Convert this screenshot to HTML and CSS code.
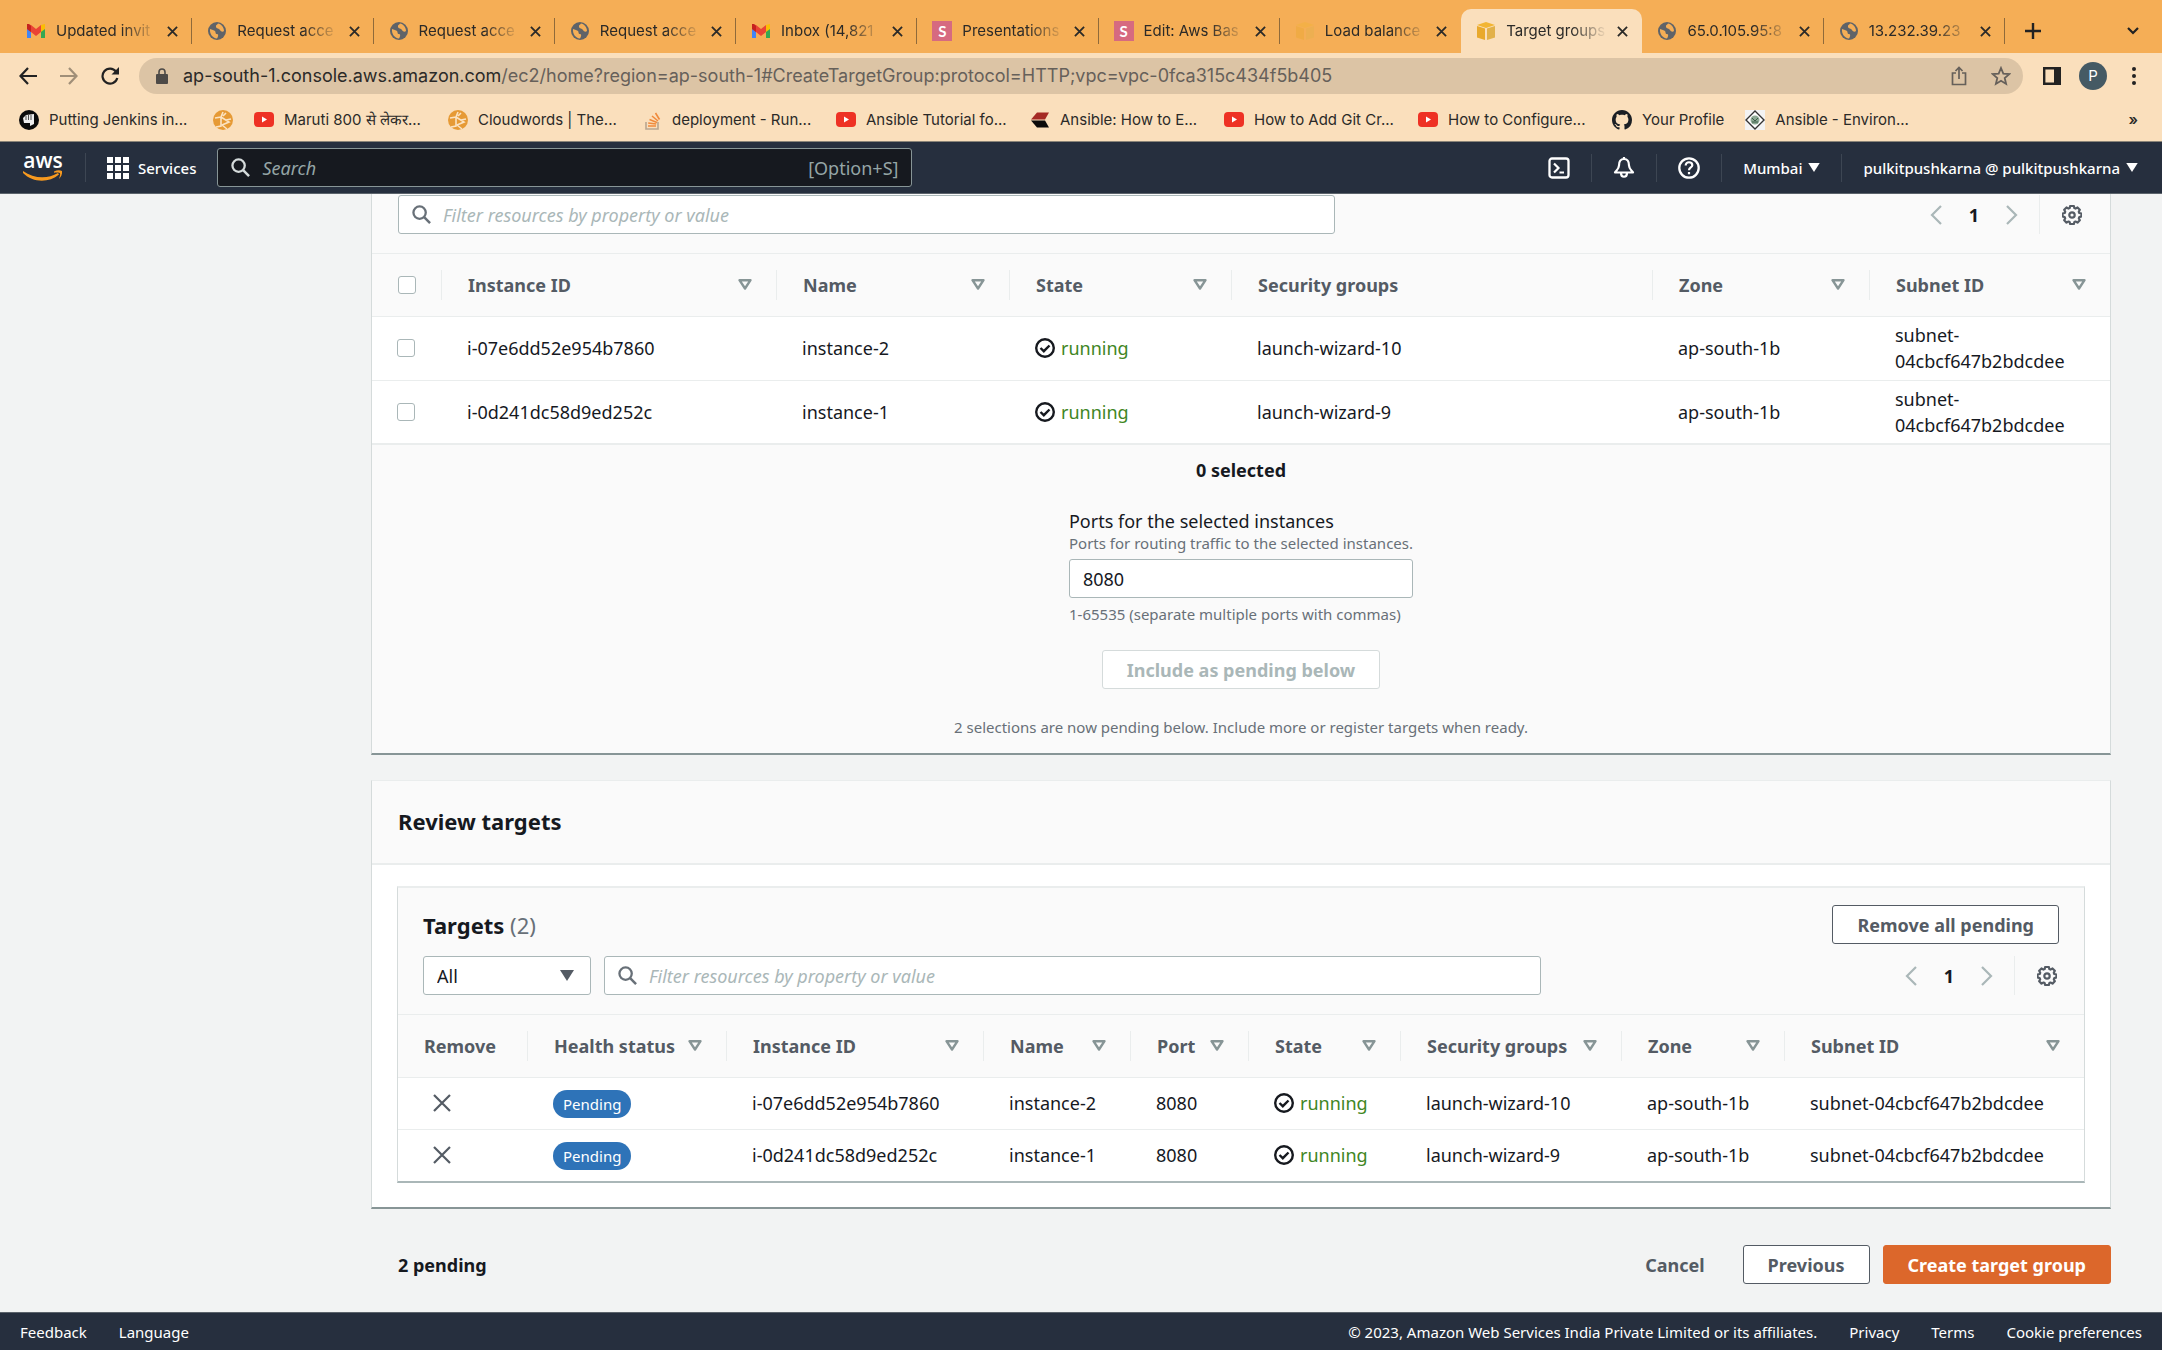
FILE: index.html
```html
<!DOCTYPE html>
<html lang="en">

<head>
    <meta charset="UTF-8">
    <meta name="viewport" content="width=device-width, initial-scale=1.0">
    <title>Target groups</title>
    <link rel="stylesheet" href="styles.css">
</head>

<body>

    <!-- shared icons -->
    <svg class="sprite" aria-hidden="true">
        <symbol id="gmail" viewBox="0 0 20 20">
            <path d="M1 4v13h4V8z" fill="#4285f4" />
            <path d="M19 4v13h-4V8z" fill="#34a853" />
            <path d="M15 4l4-1v5l-4 3z" fill="#fbbc04" />
            <path d="M1 3l4 1 5 4 5-4v7l-5 4-5-4-4-3z" fill="#ea4335" />
            <path d="M1 3v5l4 3V5L3 3z" fill="#c5221f" />
        </symbol>
        <symbol id="globe" viewBox="0 0 20 20">
            <circle cx="10" cy="10" r="9" fill="#5f6368" />
            <path d="M3 8c2 1 4 1 5 2s0 3 2 3 1 3 0 4.500C5.500 17 2.500 13 3 8zM11 2.500C10 4 8.500 4 9 6s3 1 4 3 3 2 4 1c0-4-3-7-6-7.500z" fill="#f5ae56" />
        </symbol>
        <symbol id="cube" viewBox="0 0 20 20">
            <path d="M1 4l9-3 9 3-9 3z" fill="#f2b533" />
            <path d="M1 5l8 2.500V19l-8-2.500z" fill="#e9a92c" />
            <path d="M19 5l-8 2.500V19l8-2.500z" fill="#e2b14a" />
        </symbol>
        <symbol id="close" viewBox="0 0 12 12">
            <path d="M1 1l10 10M11 1L1 11" stroke="currentColor" stroke-width="2" fill="none" />
        </symbol>
        <symbol id="youtube" viewBox="0 0 20 20">
            <rect y="2" width="20" height="15" rx="4" fill="#ee3124" />
            <path d="M8 6.500v6l5-3z" fill="#fff" />
        </symbol>
        <symbol id="cloudwords" viewBox="0 0 20 20">
            <circle cx="10" cy="10" r="10" fill="#e69a35" />
            <path d="M2 8l6-1 2-5M8 7l8 5-7 3M13 3l-3 3M18 9l-5 1M9 15l5 4M8 7v9l-5 1" stroke="#fbe3c2" stroke-width="1.600" fill="none" />
        </symbol>
        <symbol id="search" viewBox="0 0 20 20">
            <circle cx="8" cy="8" r="6.500" stroke="currentColor" stroke-width="2.400" fill="none" />
            <path d="M12.500 12.500L19 19" stroke="currentColor" stroke-width="2.600" />
        </symbol>
        <symbol id="sort" viewBox="0 0 14 11">
            <path d="M1.500 1.200h11L7 9.500z" stroke="currentColor" stroke-width="2.400" stroke-linejoin="round" fill="none" />
        </symbol>
        <symbol id="caret" viewBox="0 0 14 11">
            <path d="M0 0h14L7 11z" fill="currentColor" />
        </symbol>
        <symbol id="check" viewBox="0 0 20 20">
            <circle cx="10" cy="10" r="8.800" stroke="currentColor" stroke-width="2.400" fill="none" />
            <path d="M5.500 10l3.300 3.200 5.700-5.700" stroke="currentColor" stroke-width="2.400" fill="none" />
        </symbol>
        <symbol id="prev" viewBox="0 0 12 20">
            <path d="M11 1L2 10l9 9" stroke="currentColor" stroke-width="2.200" fill="none" />
        </symbol>
        <symbol id="next" viewBox="0 0 12 20">
            <path d="M1 1l9 9-9 9" stroke="currentColor" stroke-width="2.200" fill="none" />
        </symbol>
        <symbol id="gear" viewBox="0 0 20 20">
            <path d="M8.200 1h3.600l.6 2.100 1.100.5 2-1.100 2.300 2.300-1 2 .5 1.200 2.100.5v3l-2.100.6-.5 1.200 1 2-2.300 2.300-2-1.100-1.100.5-.6 2.100H8.200l-.6-2.100-1.100-.5-2 1.100-2.300-2.300 1-2-.5-1.200L.6 11.500v-3L2.700 8l.5-1.200-1-2 2.300-2.300 2 1.100 1.100-.5z" stroke="currentColor" stroke-width="2.200" stroke-linejoin="round" fill="none" />
            <circle cx="10" cy="10" r="2.700" stroke="currentColor" stroke-width="2.200" fill="none" />
        </symbol>
    </svg>

    <div class="browser">
        <div class="tabstrip">
            <div class="tabs">
                <div class="tab"><svg class="icon"><use href="#gmail" /></svg><span class="tab-title">Updated invit</span><button class="tab-close" aria-label="Close tab"><svg><use href="#close" /></svg></button></div>
                <div class="tab"><svg class="icon"><use href="#globe" /></svg><span class="tab-title">Request acce</span><button class="tab-close" aria-label="Close tab"><svg><use href="#close" /></svg></button></div>
                <div class="tab"><svg class="icon"><use href="#globe" /></svg><span class="tab-title">Request acce</span><button class="tab-close" aria-label="Close tab"><svg><use href="#close" /></svg></button></div>
                <div class="tab"><svg class="icon"><use href="#globe" /></svg><span class="tab-title">Request acce</span><button class="tab-close" aria-label="Close tab"><svg><use href="#close" /></svg></button></div>
                <div class="tab"><svg class="icon"><use href="#gmail" /></svg><span class="tab-title">Inbox (14,821</span><button class="tab-close" aria-label="Close tab"><svg><use href="#close" /></svg></button></div>
                <div class="tab"><span class="icon letter">S</span><span class="tab-title">Presentations</span><button class="tab-close" aria-label="Close tab"><svg><use href="#close" /></svg></button></div>
                <div class="tab"><span class="icon letter">S</span><span class="tab-title">Edit: Aws Bas</span><button class="tab-close" aria-label="Close tab"><svg><use href="#close" /></svg></button></div>
                <div class="tab no-line"><svg class="icon faded"><use href="#cube" /></svg><span class="tab-title">Load balance</span><button class="tab-close" aria-label="Close tab"><svg><use href="#close" /></svg></button></div>
                <div class="tab active"><svg class="icon"><use href="#cube" /></svg><span class="tab-title">Target groups</span><button class="tab-close" aria-label="Close tab"><svg><use href="#close" /></svg></button></div>
                <div class="tab"><svg class="icon"><use href="#globe" /></svg><span class="tab-title">65.0.105.95:8</span><button class="tab-close" aria-label="Close tab"><svg><use href="#close" /></svg></button></div>
                <div class="tab"><svg class="icon"><use href="#globe" /></svg><span class="tab-title">13.232.39.23</span><button class="tab-close" aria-label="Close tab"><svg><use href="#close" /></svg></button></div>
            </div>
            <div class="tab-tools">
                <button aria-label="New tab"><svg width="16" height="16" viewBox="0 0 16 16"><path d="M8 0v16M0 8h16" stroke="#222" stroke-width="2.400" /></svg></button>
                <button aria-label="Search tabs"><svg width="12" height="8" viewBox="0 0 12 8"><path d="M1 1l5 5 5-5" stroke="#222" stroke-width="2.200" fill="none" /></svg></button>
            </div>
        </div>

        <div class="toolbar">
            <div class="nav-buttons">
                <button aria-label="Back"><svg width="18" height="18" viewBox="0 0 18 18"><path d="M18 9H2M9 1L1.500 9 9 17" stroke="#222" stroke-width="2.200" fill="none" /></svg></button>
                <button aria-label="Forward"><svg width="18" height="18" viewBox="0 0 18 18"><path d="M0 9h16M9 1l7.500 8L9 17" stroke="#a08f78" stroke-width="2.200" fill="none" /></svg></button>
                <button aria-label="Reload"><svg width="18" height="18" viewBox="0 0 18 18"><path d="M15 4.500A7.500 7.500 0 1 0 16.300 11" stroke="#222" stroke-width="2.200" fill="none" /><path d="M18 0v7.500h-7.500z" fill="#222" /></svg></button>
            </div>
            <div class="omnibox">
                <svg width="12" height="16" viewBox="0 0 12 16"><rect y="6" width="12" height="10" rx="1" fill="#4d4a47" /><path d="M3 7V4a3 3 0 0 1 6 0v3" stroke="#4d4a47" stroke-width="1.600" fill="none" /></svg>
                <span class="url">ap-south-1.console.aws.amazon.com<span>/ec2/home?region=ap-south-1#CreateTargetGroup:protocol=HTTP;vpc=vpc-0fca315c434f5b405</span></span>
                <svg width="16" height="20" viewBox="0 0 16 20"><path d="M5 7H1.500v11.500h13V7H11M8 13V2M4.500 5L8 1.500 11.500 5" stroke="#66605a" stroke-width="1.700" fill="none" /></svg>
                <svg width="20" height="20" viewBox="0 0 20 20"><path d="M10 2l2.300 5.600 6 .5-4.600 3.900 1.400 5.900L10 14.700l-5.100 3.200L6.300 12 1.700 8.100l6-.5z" stroke="#66605a" stroke-width="1.800" fill="none" /></svg>
            </div>
            <div class="tool-buttons">
                <button aria-label="Side panel"><svg width="18" height="18" viewBox="0 0 18 18"><path d="M1.200 1.200h15.600v15.600H1.200z" stroke="#222" stroke-width="2.400" fill="none" /><path d="M11 0h7v18h-7z" fill="#222" /></svg></button>
                <button class="avatar">P</button>
                <button aria-label="Menu"><svg width="4" height="18" viewBox="0 0 4 18"><circle cx="2" cy="2" r="2" fill="#222" /><circle cx="2" cy="9" r="2" fill="#222" /><circle cx="2" cy="16" r="2" fill="#222" /></svg></button>
            </div>
        </div>

        <div class="bookmarks">
            <a href="#"><svg class="icon" viewBox="0 0 20 20"><circle cx="10" cy="10" r="10" fill="#0b0b0b" /><path d="M4 8l3-3 8-1v10l-4 2v-3H5z" fill="#eee" /><path d="M7 5.500V10M9.500 5v5M12 5v5" stroke="#0b0b0b" stroke-width=".7" /></svg><span class="bm">Putting Jenkins in...</span></a>
            <a href="#" aria-label="Cloudwords"><svg class="icon"><use href="#cloudwords" /></svg></a>
            <a href="#"><svg class="icon"><use href="#youtube" /></svg><span class="bm">Maruti 800 से लेकर...</span></a>
            <a href="#"><svg class="icon"><use href="#cloudwords" /></svg><span class="bm">Cloudwords | The...</span></a>
            <a href="#"><svg class="icon" viewBox="0 0 20 20"><path d="M4 12v7h12v-7" stroke="#b9a690" stroke-width="1.600" fill="none" /><path d="M6 16h8M6.200 13l8 1M7.500 9.500l7.500 3M10 6l6 5M13.500 3l4 6.500" stroke="#f08a3c" stroke-width="1.600" /></svg><span class="bm">deployment - Run...</span></a>
            <a href="#"><svg class="icon"><use href="#youtube" /></svg><span class="bm">Ansible Tutorial fo...</span></a>
            <a href="#"><svg class="icon" viewBox="0 0 20 20"><path d="M7 2.500h12l-4 7H1z" fill="#a52a24" /><path d="M1 10.500h14l4 7H7z" fill="#0b0b0b" /></svg><span class="bm">Ansible: How to E...</span></a>
            <a href="#"><svg class="icon"><use href="#youtube" /></svg><span class="bm">How to Add Git Cr...</span></a>
            <a href="#"><svg class="icon"><use href="#youtube" /></svg><span class="bm">How to Configure...</span></a>
            <a href="#"><svg class="icon" viewBox="0 0 16 16"><path fill="#1b1f24" d="M8 0C3.580 0 0 3.580 0 8c0 3.540 2.290 6.530 5.470 7.590.4.070.55-.17.55-.38 0-.19-.01-.82-.01-1.490-2.010.37-2.530-.49-2.690-.94-.09-.23-.48-.94-.82-1.130-.28-.15-.68-.52-.01-.53.63-.01 1.080.58 1.230.82.720 1.210 1.870.87 2.330.66.070-.52.28-.87.510-1.070-1.780-.2-3.640-.89-3.640-3.950 0-.87.310-1.590.82-2.150-.08-.2-.36-1.020.08-2.120 0 0 .67-.21 2.200.82.640-.18 1.320-.27 2-.27s1.360.09 2 .27c1.530-1.040 2.200-.82 2.200-.82.440 1.100.160 1.920.080 2.120.510.560.820 1.270.820 2.150 0 3.070-1.870 3.750-3.650 3.950.290.250.540.730.540 1.480 0 1.070-.010 1.930-.010 2.200 0 .210.150.460.550.380A8.010 8.010 0 0 0 16 8c0-4.420-3.580-8-8-8z" /></svg><span>Your Profile</span></a>
            <a href="#"><svg class="icon" viewBox="0 0 20 20"><rect width="20" height="20" fill="#f3f3f3" /><path d="M10 1l9 9-9 9-9-9z" stroke="#333" stroke-width="1.400" fill="#fff" /><circle cx="10" cy="10" r="4.500" fill="#8ba893" /><path d="M7 8l3 3 3-3M7 12h6" stroke="#3c5c48" fill="none" /></svg><span class="bm">Ansible - Environ...</span></a>
            <button class="more" aria-label="More bookmarks">»</button>
        </div>
    </div>

    <header class="aws-header">
        <a href="#" class="logo" aria-label="AWS home">
            <span>aws</span>
            <svg width="40" height="12" viewBox="0 0 40 12"><path d="M0 1c11 8 25 8 35 2l1 1.500C26 13 10 13 0 3z" fill="#f79a1f" /><path d="M31 1.500c3-1.500 6-1.500 8-.5.500 3-1 6-3 8 .5-2 1.500-4 1-6-2-.5-4-.5-6-.3z" fill="#f79a1f" /></svg>
        </a>
        <button class="services"><svg width="22" height="22" viewBox="0 0 22 22"><path d="M0 0h6v6H0zM8 0h6v6H8zM16 0h6v6h-6zM0 8h6v6H0zM8 8h6v6H8zM16 8h6v6h-6zM0 16h6v6H0zM8 16h6v6H8zM16 16h6v6h-6z" fill="#fff" /></svg>Services</button>
        <label class="aws-search">
            <svg width="19" height="19"><use href="#search" /></svg>
            <input type="text" placeholder="Search" aria-label="Search">
            <span>[Option+S]</span>
        </label>
        <nav class="aws-nav">
            <button aria-label="CloudShell"><svg width="22" height="22" viewBox="0 0 22 22"><rect x="1.500" y="1.500" width="19" height="19" rx="2.500" stroke="#fff" stroke-width="2.300" fill="none" /><path d="M6 6.500l4.500 4.500L6 15.500M11.500 15.500H16" stroke="#fff" stroke-width="2.200" fill="none" /></svg></button>
            <button aria-label="Notifications"><svg width="22" height="22" viewBox="0 0 22 22"><path d="M11 2c-4 0-5 3.500-5 6.500S4 13 2 15.500h18C18 13 16 11.500 16 8.500S15 2 11 2zM11 0v2M8 16c0 5 6 5 6 0" stroke="#fff" stroke-width="2.200" stroke-linejoin="round" fill="none" /></svg></button>
            <button aria-label="Help"><svg width="22" height="22" viewBox="0 0 22 22"><circle cx="11" cy="11" r="9.700" stroke="#fff" stroke-width="2.300" fill="none" /><path d="M7.700 8.500c0-4.500 6.600-4 6.600-.3 0 2.300-3.300 2.300-3.300 5M11 15v2.300" stroke="#fff" stroke-width="2.200" fill="none" /></svg></button>
            <button>Mumbai<svg width="12" height="9"><use href="#caret" /></svg></button>
            <button>pulkitpushkarna @ pulkitpushkarna<svg width="12" height="9"><use href="#caret" /></svg></button>
        </nav>
    </header>

    <main>
        <section class="panel first">
            <div class="filter-bar">
                <label class="filter">
                    <svg width="19" height="19"><use href="#search" /></svg>
                    <input type="text" placeholder="Filter resources by property or value" aria-label="Filter instances">
                </label>
                <div class="pager">
                    <button aria-label="Previous page"><svg width="12" height="20"><use href="#prev" /></svg></button>
                    <b>1</b>
                    <button aria-label="Next page"><svg width="12" height="20"><use href="#next" /></svg></button>
                    <button class="settings" aria-label="Preferences"><svg width="20" height="20"><use href="#gear" /></svg></button>
                </div>
            </div>

            <table class="instances">
                <colgroup>
                    <col class="w-check">
                    <col class="w-id">
                    <col class="w-name">
                    <col class="w-state">
                    <col>
                    <col class="w-zone">
                    <col class="w-subnet">
                </colgroup>
                <thead>
                    <tr>
                        <th><div><input type="checkbox" aria-label="Select all"></div></th>
                        <th><div>Instance ID<svg><use href="#sort" /></svg></div></th>
                        <th><div>Name<svg><use href="#sort" /></svg></div></th>
                        <th><div>State<svg><use href="#sort" /></svg></div></th>
                        <th><div>Security groups</div></th>
                        <th><div>Zone<svg><use href="#sort" /></svg></div></th>
                        <th><div>Subnet ID<svg><use href="#sort" /></svg></div></th>
                    </tr>
                </thead>
                <tbody>
                    <tr>
                        <td><input type="checkbox" aria-label="Select instance-2"></td>
                        <td>i-07e6dd52e954b7860</td>
                        <td>instance-2</td>
                        <td><span class="state"><svg><use href="#check" /></svg>running</span></td>
                        <td>launch-wizard-10</td>
                        <td>ap-south-1b</td>
                        <td>subnet-04cbcf647b2bdcdee</td>
                    </tr>
                    <tr>
                        <td><input type="checkbox" aria-label="Select instance-1"></td>
                        <td>i-0d241dc58d9ed252c</td>
                        <td>instance-1</td>
                        <td><span class="state"><svg><use href="#check" /></svg>running</span></td>
                        <td>launch-wizard-9</td>
                        <td>ap-south-1b</td>
                        <td>subnet-04cbcf647b2bdcdee</td>
                    </tr>
                </tbody>
            </table>

            <div class="selection">
                <b>0 selected</b>
                <div class="ports">
                    <label for="ports">Ports for the selected instances</label>
                    <small>Ports for routing traffic to the selected instances.</small>
                    <input type="text" id="ports" value="8080">
                    <small>1-65535 (separate multiple ports with commas)</small>
                </div>
                <button class="btn" disabled>Include as pending below</button>
                <small>2 selections are now pending below. Include more or register targets when ready.</small>
            </div>
        </section>

        <section class="panel">
            <h2 class="panel-title">Review targets</h2>
            <div class="targets">
                <div class="targets-head">
                    <h2>Targets <span>(2)</span></h2>
                    <button class="btn">Remove all pending</button>
                </div>
                <div class="filter-bar">
                    <div class="select">
                        <select aria-label="Health status filter">
                            <option>All</option>
                        </select>
                        <svg width="14" height="11"><use href="#caret" /></svg>
                    </div>
                    <label class="filter">
                        <svg width="19" height="19"><use href="#search" /></svg>
                        <input type="text" placeholder="Filter resources by property or value" aria-label="Filter targets">
                    </label>
                    <div class="pager">
                        <button aria-label="Previous page"><svg width="12" height="20"><use href="#prev" /></svg></button>
                        <b>1</b>
                        <button aria-label="Next page"><svg width="12" height="20"><use href="#next" /></svg></button>
                        <button class="settings" aria-label="Preferences"><svg width="20" height="20"><use href="#gear" /></svg></button>
                    </div>
                </div>

                <table class="review">
                    <colgroup>
                        <col class="r-remove">
                        <col class="r-health">
                        <col class="r-id">
                        <col class="r-name">
                        <col class="r-port">
                        <col class="r-state">
                        <col class="r-sg">
                        <col class="r-zone">
                        <col>
                    </colgroup>
                    <thead>
                        <tr>
                            <th><div>Remove</div></th>
                            <th><div>Health status<svg><use href="#sort" /></svg></div></th>
                            <th><div>Instance ID<svg><use href="#sort" /></svg></div></th>
                            <th><div>Name<svg><use href="#sort" /></svg></div></th>
                            <th><div>Port<svg><use href="#sort" /></svg></div></th>
                            <th><div>State<svg><use href="#sort" /></svg></div></th>
                            <th><div>Security groups<svg><use href="#sort" /></svg></div></th>
                            <th><div>Zone<svg><use href="#sort" /></svg></div></th>
                            <th><div>Subnet ID<svg><use href="#sort" /></svg></div></th>
                        </tr>
                    </thead>
                    <tbody>
                        <tr>
                            <td><button class="remove" aria-label="Remove instance-2"><svg viewBox="0 0 18 18"><path d="M1 1l16 16M17 1L1 17" stroke="currentColor" stroke-width="2.200" /></svg></button></td>
                            <td><span class="badge">Pending</span></td>
                            <td>i-07e6dd52e954b7860</td>
                            <td>instance-2</td>
                            <td>8080</td>
                            <td><span class="state"><svg><use href="#check" /></svg>running</span></td>
                            <td>launch-wizard-10</td>
                            <td>ap-south-1b</td>
                            <td>subnet-04cbcf647b2bdcdee</td>
                        </tr>
                        <tr>
                            <td><button class="remove" aria-label="Remove instance-1"><svg viewBox="0 0 18 18"><path d="M1 1l16 16M17 1L1 17" stroke="currentColor" stroke-width="2.200" /></svg></button></td>
                            <td><span class="badge">Pending</span></td>
                            <td>i-0d241dc58d9ed252c</td>
                            <td>instance-1</td>
                            <td>8080</td>
                            <td><span class="state"><svg><use href="#check" /></svg>running</span></td>
                            <td>launch-wizard-9</td>
                            <td>ap-south-1b</td>
                            <td>subnet-04cbcf647b2bdcdee</td>
                        </tr>
                    </tbody>
                </table>
            </div>
        </section>

        <div class="actions">
            <b>2 pending</b>
            <button class="btn link">Cancel</button>
            <button class="btn">Previous</button>
            <button class="btn primary">Create target group</button>
        </div>
    </main>

    <footer>
        <a href="#">Feedback</a>
        <a href="#">Language</a>
        <span>© 2023, Amazon Web Services India Private Limited or its affiliates.</span>
        <a href="#">Privacy</a>
        <a href="#">Terms</a>
        <a href="#">Cookie preferences</a>
    </footer>

</body>

</html>
```
FILE: styles.css
```css
* {
    box-sizing: border-box;
}

body {
    margin: 0;
    height: 100vh;
    display: flex;
    flex-direction: column;
    overflow: hidden;
    background: #f2f3f3;
    color: #16191f;
    font-family: "Noto Sans", "Open Sans", sans-serif;
    font-size: 18px;
    line-height: 26px;
}

button,
input,
select {
    font: inherit;
    color: inherit;
    margin: 0;
}

button {
    background: none;
    border: none;
    padding: 0;
    cursor: pointer;
}

a {
    color: inherit;
    text-decoration: none;
}

svg {
    display: block;
    flex: none;
}

.sprite {
    position: absolute;
    width: 0;
    height: 0;
}

.icon {
    width: 20px;
    height: 20px;
}

/* browser */

.browser {
    flex: none;
    background: #fadfbc;
    border-bottom: 1px solid #8a8478;
    color: #2b2a28;
    font-family: Inter, Roboto, sans-serif;
    font-size: 15px;
    line-height: 20px;
}

.tabstrip {
    display: flex;
    height: 53px;
    padding-top: 9px;
    padding-left: 11px;
    background: #f5ae56;
}

.tabs {
    flex: 1;
    display: flex;
    min-width: 0;
}

.tab {
    flex: 1;
    min-width: 0;
    display: flex;
    align-items: center;
    gap: 10px;
    padding: 0 14px 0 15px;
    background: linear-gradient(#8f6a3a, #8f6a3a) right center / 1px 26px no-repeat;
}

.tab.no-line {
    background: none;
}

.tab.active {
    background: #fadfbc;
    border-radius: 10px 10px 0 0;
}

.tab-title {
    flex: 1;
    white-space: nowrap;
    -webkit-mask-image: linear-gradient(to right, #000 65%, transparent);
    mask-image: linear-gradient(to right, #000 65%, transparent);
}

.tab-close svg {
    width: 11px;
    height: 11px;
}

.letter {
    flex: none;
    background: #d66a80;
    color: #fff;
    font-family: Lato, sans-serif;
    font-weight: 700;
    text-align: center;
}

.faded {
    opacity: .4;
}

.tab-tools {
    flex: none;
    width: 157px;
    display: flex;
    align-items: center;
    justify-content: space-between;
    padding: 0 23px 0 20px;
}

.toolbar {
    display: flex;
    align-items: center;
    height: 46px;
    padding: 0 26px 0 19px;
}

.nav-buttons,
.tool-buttons {
    display: flex;
    align-items: center;
    gap: 23px;
}

.omnibox {
    flex: 1;
    display: flex;
    align-items: center;
    gap: 24px;
    height: 36px;
    margin: 0 20px;
    padding: 0 12px 0 17px;
    border-radius: 18px;
    background: #dcc4a5;
    font-size: 18px;
}

.url {
    flex: 1;
    margin-left: -9px;
    white-space: nowrap;
}

.url span {
    color: #66605a;
}

.tool-buttons {
    gap: 18px;
}

.avatar {
    width: 28px;
    height: 28px;
    margin-right: 7px;
    border-radius: 50%;
    background: #455a64;
    color: #fff;
}

.bookmarks {
    display: flex;
    align-items: center;
    gap: 21px;
    height: 42px;
    padding: 0 24px 0 19px;
    white-space: nowrap;
}

.bookmarks a {
    display: flex;
    align-items: center;
    gap: 10px;
}

.bm {
    width: 143px;
}

.more {
    margin-left: auto;
    font-weight: 600;
}

/* aws header */

.aws-header {
    flex: none;
    display: flex;
    align-items: center;
    height: 52px;
    padding-left: 23px;
    background: #262f3e;
    border-bottom: 1px solid #5b636b;
    color: #fff;
    font-size: 15px;
    font-weight: 500;
}

.logo {
    padding-right: 22px;
    border-right: 1px solid #3d4653;
}

.logo span {
    display: block;
    height: 17px;
    font: 600 21px/14px "Open Sans", sans-serif;
    text-align: center;
}

.services {
    display: flex;
    align-items: center;
    gap: 9px;
    padding: 0 21px;
}

.aws-search {
    width: 695px;
    height: 39px;
    display: flex;
    align-items: center;
    gap: 12px;
    padding: 0 13px;
    background: #16191f;
    border: 1px solid #879596;
    border-radius: 3px;
    color: #d5dbdb;
    font-size: 18px;
    font-weight: 400;
}

.aws-search span {
    color: #95a5a6;
}

.aws-search input {
    flex: 1;
    min-width: 0;
    padding: 0;
    border: none;
    background: none;
}

input::placeholder {
    color: #aab7b8;
    font-style: italic;
    opacity: 1;
}

.aws-search input::placeholder {
    color: #95a5a6;
}

.aws-nav {
    margin-left: auto;
    padding-right: 3px;
    display: flex;
    align-items: center;
}

.aws-nav button {
    height: 28px;
    display: flex;
    align-items: center;
    gap: 6px;
    padding: 0 21px;
    border-left: 1px solid #3d4653;
}

.aws-nav button:first-child {
    border-left: none;
}

/* content */

main {
    flex: 1;
    min-height: 0;
    overflow: hidden;
    padding: 0 51px 0 371px;
}

.panel {
    margin-bottom: 25px;
    background: #fff;
    border: 1px solid #d5dbdb;
    border-top-color: #eaeded;
    border-bottom: 2px solid #879596;
}

.panel.first {
    border-top: none;
    background: #fafafa;
}

.filter-bar {
    display: flex;
    align-items: center;
    gap: 13px;
    padding: 0 26px 19px;
    background: #fafafa;
    border-bottom: 1px solid #eaeded;
}

.first .filter-bar {
    padding-top: 1px;
}

.filter {
    flex: 0 1 937px;
    display: flex;
    align-items: center;
    gap: 12px;
    height: 39px;
    padding: 0 13px;
    background: #fff;
    border: 1px solid #aab7b8;
    border-radius: 3px;
    color: #687078;
}

.filter input {
    flex: 1;
    min-width: 0;
    padding: 0;
    border: none;
    background: none;
}

.select {
    position: relative;
    width: 168px;
}

.select select {
    width: 100%;
    height: 39px;
    padding: 0 13px;
    appearance: none;
    background: #fff;
    border: 1px solid #aab7b8;
    border-radius: 3px;
}

.select svg {
    position: absolute;
    right: 17px;
    top: 14px;
    color: #545b64;
    pointer-events: none;
}

.pager {
    margin-left: auto;
    display: flex;
    align-items: center;
    color: #aab7b8;
}

.pager b {
    width: 64px;
    text-align: center;
    color: #16191f;
}

.pager .settings {
    height: 39px;
    display: flex;
    align-items: center;
    margin-left: 21px;
    padding: 0 2px 0 22px;
    border-left: 1px solid #eaeded;
    color: #545b64;
}

table {
    width: 100%;
    table-layout: fixed;
    border-collapse: collapse;
}

th {
    height: 62px;
    padding: 0;
    background: #fafafa;
    color: #545b64;
    text-align: left;
}

th div {
    display: flex;
    align-items: center;
    justify-content: space-between;
    height: 30px;
    padding: 0 24px 0 26px;
    border-right: 1px solid #eaeded;
}

th:last-child div {
    border-right: none;
}

th svg {
    width: 14px;
    height: 11px;
    color: #879596;
}

td {
    padding: 6px 25px;
    background: #fff;
    border-top: 1px solid #eaeded;
    overflow-wrap: break-word;
}

.instances {
    border-bottom: 2px solid #eaeded;
}

.instances td {
    height: 64px;
    padding: 5px 25px;
}

.review td {
    height: 52px;
    white-space: nowrap;
}

.w-check {
    width: 70px;
}

.w-id {
    width: 335px;
}

.w-name {
    width: 233px;
}

.w-state {
    width: 222px;
}

.w-zone {
    width: 217px;
}

.w-subnet {
    width: 240px;
}

.r-remove {
    width: 130px;
}

.r-health {
    width: 199px;
}

.r-id {
    width: 257px;
}

.r-name {
    width: 147px;
}

.r-port {
    width: 118px;
}

.r-state {
    width: 152px;
}

.r-sg {
    width: 221px;
}

.r-zone {
    width: 163px;
}

input[type="checkbox"] {
    display: block;
    width: 18px;
    height: 18px;
    appearance: none;
    background: #fff;
    border: 1px solid #aab7b8;
    border-radius: 3px;
}

.state {
    display: flex;
    align-items: center;
    gap: 6px;
    color: #3f8624;
}

.state svg {
    width: 20px;
    height: 20px;
    color: #16191f;
}

.badge {
    display: inline-block;
    padding: 0 10px;
    border-radius: 14px;
    background: #2e73b8;
    color: #fff;
    font-size: 15px;
    line-height: 28px;
    vertical-align: middle;
}

.remove {
    display: block;
    padding: 0 10px;
    color: #545b64;
}

.remove svg {
    width: 18px;
    height: 18px;
}

.selection {
    display: flex;
    flex-direction: column;
    align-items: center;
    padding: 12px 0 16px;
}

small {
    font-size: 15px;
    line-height: 20px;
    color: #687078;
}

.ports {
    display: flex;
    flex-direction: column;
    margin: 26px 0;
}

.ports label {
    line-height: 24px;
}

.ports input {
    height: 39px;
    margin: 6px 0;
    padding: 0 13px;
    background: #fff;
    border: 1px solid #aab7b8;
    border-radius: 3px;
}

.selection > small {
    margin-top: 28px;
}

.btn {
    height: 39px;
    padding: 0 24px;
    background: #fff;
    border: 1px solid #545b64;
    border-radius: 3px;
    color: #545b64;
    font-weight: 700;
}

.btn:disabled {
    border-color: #d5dbdb;
    color: #aab7b8;
}

.btn.link {
    background: none;
    border-color: transparent;
}

.btn.primary {
    background: #dc672b;
    border-color: #dc672b;
    color: #fff;
}

h2 {
    margin: 0;
    font-size: 22px;
    line-height: 32px;
}

.panel-title {
    padding: 24px 26px 26px;
    background: #fafafa;
    border-bottom: 2px solid #eaeded;
}

.targets {
    margin: 21px 25px 24px;
    border: 1px solid #d5dbdb;
    border-top: 2px solid #eaeded;
    border-bottom: 2px solid #aab7b8;
}

.targets-head {
    display: flex;
    align-items: center;
    justify-content: space-between;
    padding: 17px 25px 12px;
    background: #fafafa;
}

.targets .filter-bar {
    padding: 0 25px 19px;
}

.targets-head span {
    font-weight: 400;
    color: #687078;
}

.actions {
    display: flex;
    align-items: center;
    gap: 13px;
    padding: 11px 0 0 27px;
}

.actions b {
    margin-right: auto;
}

footer {
    flex: none;
    display: flex;
    align-items: center;
    gap: 32px;
    height: 38px;
    padding: 0 20px;
    background: #262f3e;
    border-top: 1px solid #5b636b;
    color: #fff;
    font-size: 15px;
}

footer span {
    margin-left: auto;
}
```
